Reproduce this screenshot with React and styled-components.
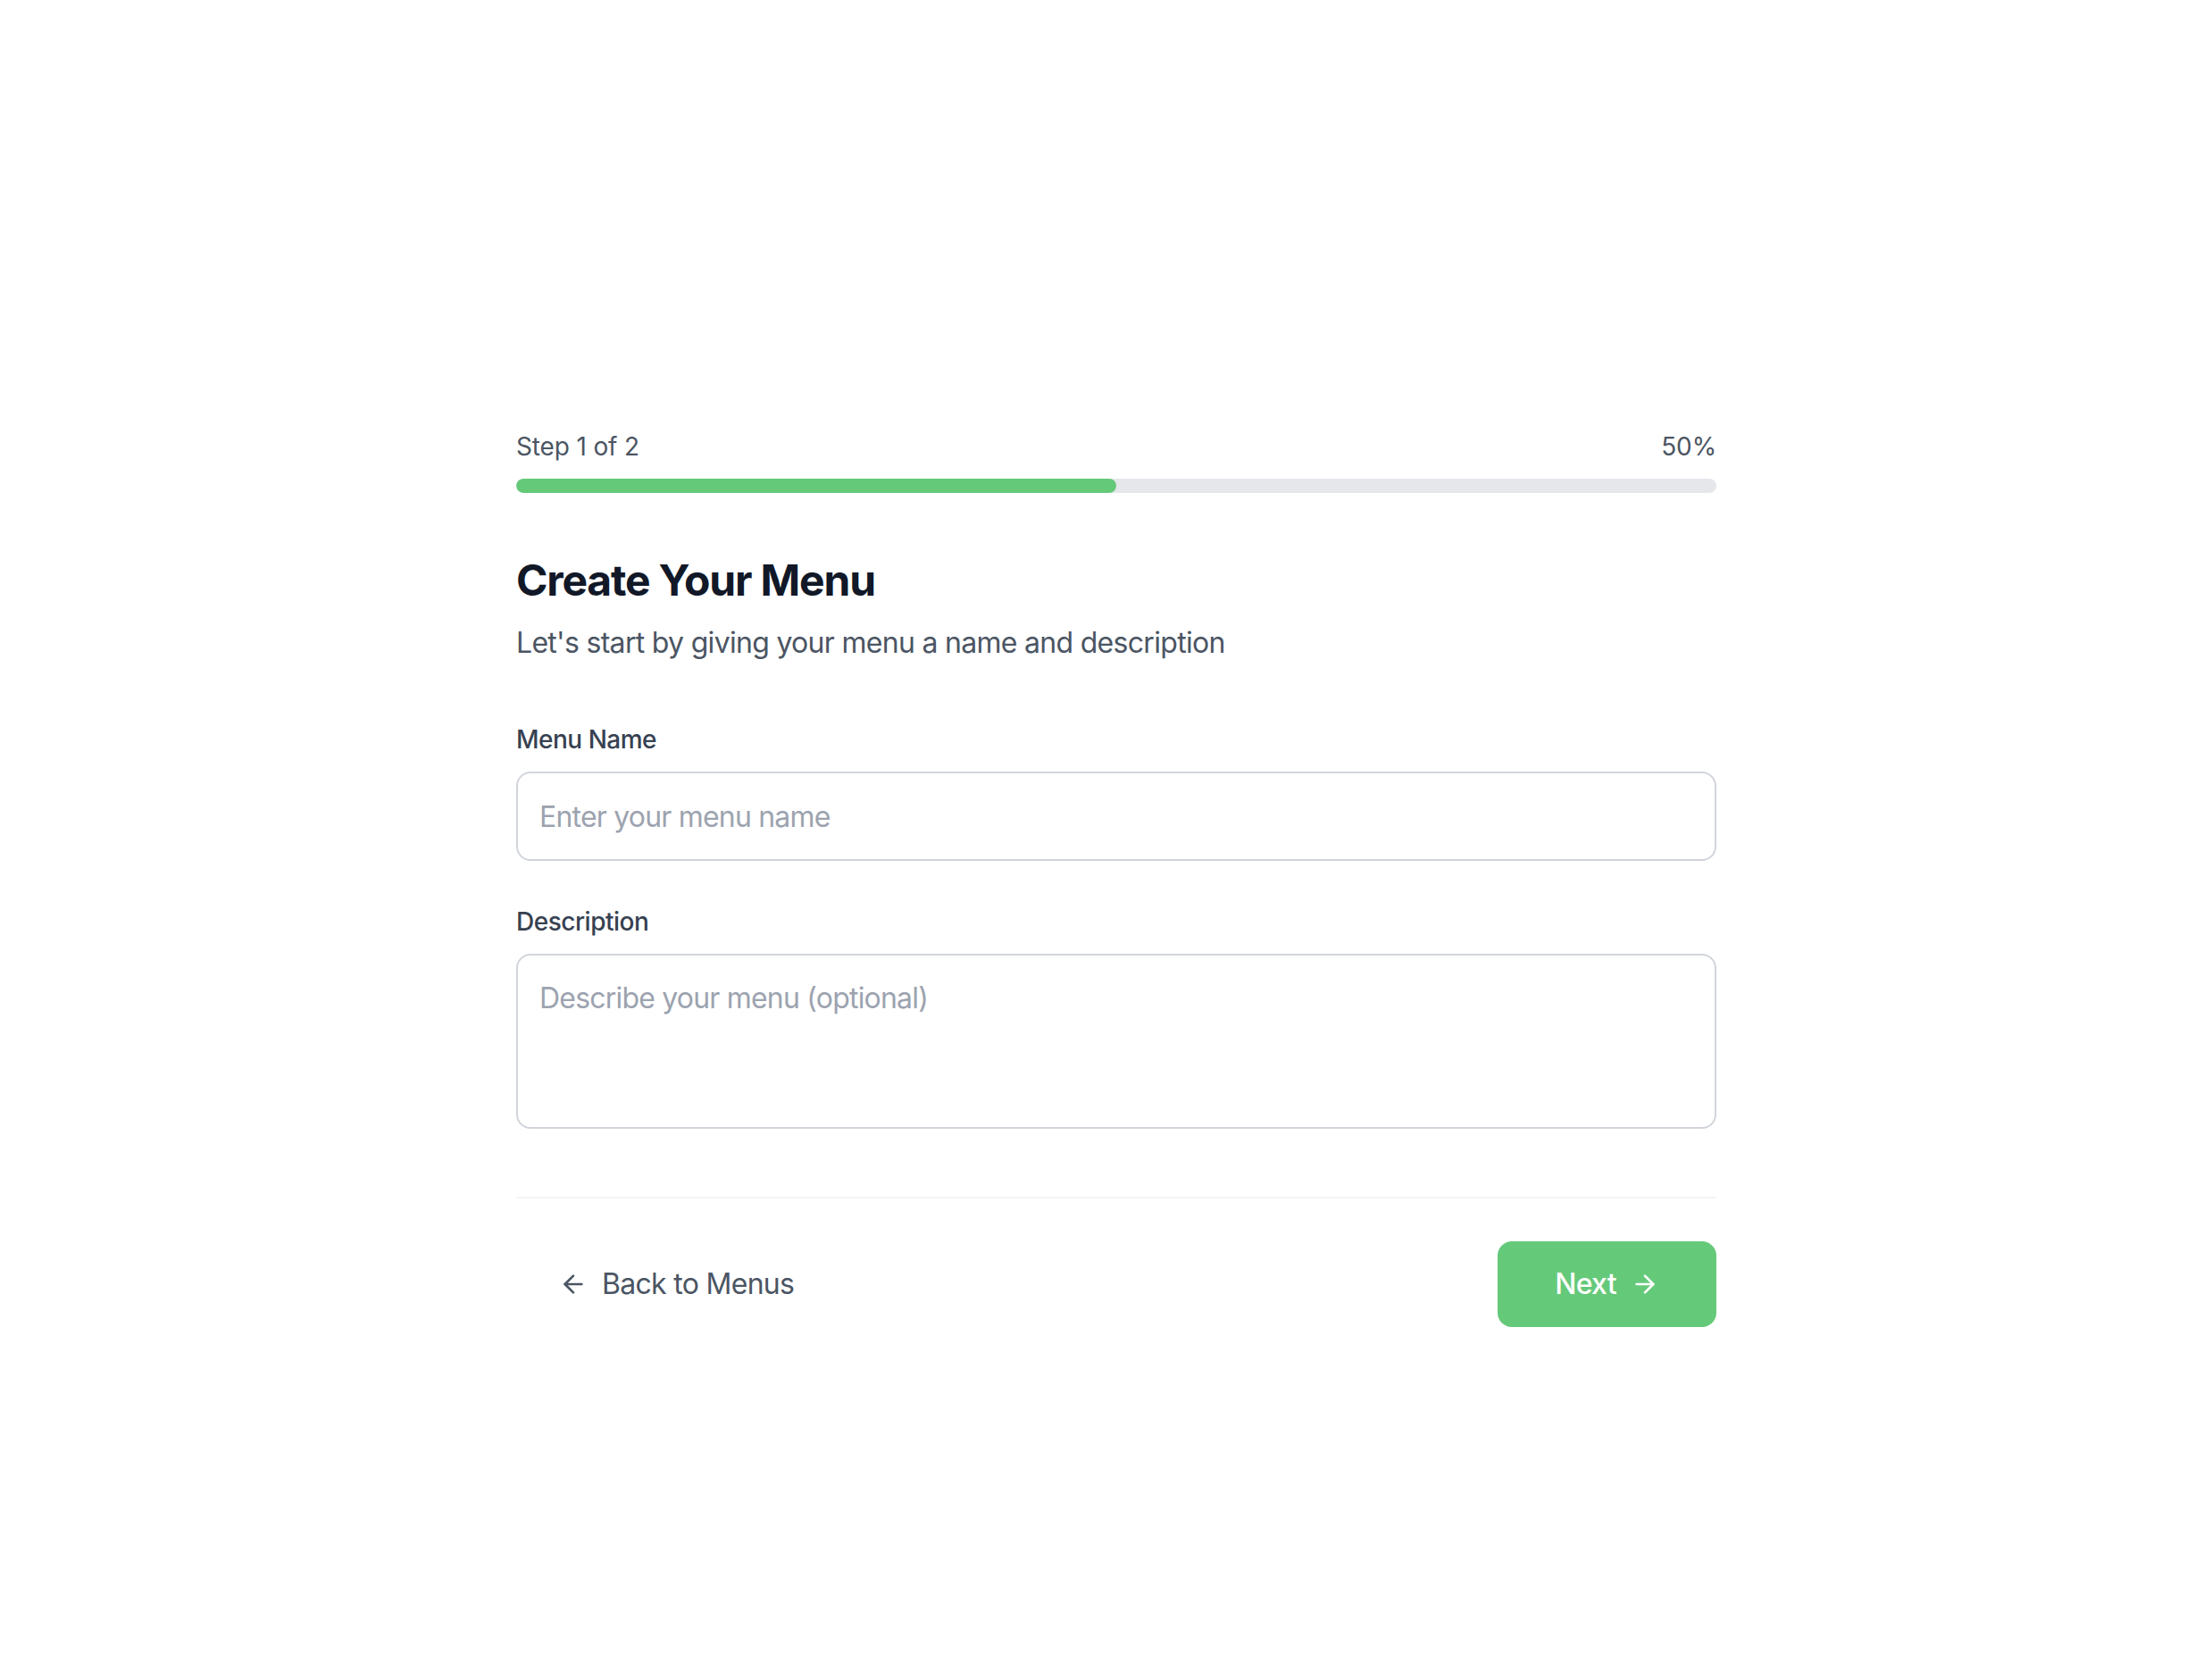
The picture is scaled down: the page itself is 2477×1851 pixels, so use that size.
import React from "react";
import styled, { createGlobalStyle } from "styled-components";
import { ArrowLeft, ArrowRight } from "lucide-react";

const GlobalStyle = createGlobalStyle`
  * { box-sizing: border-box; }
  html, body { margin: 0; padding: 0; background: #ffffff; }
  body {
    font-family: Inter, "Noto Sans", "Liberation Sans", sans-serif;
    -webkit-font-smoothing: antialiased;
  }
`;

const Page = styled.main`
  min-height: 1851px;
  display: flex;
  justify-content: center;
  padding: 480px 0 0 23px;
`;

const Container = styled.div`
  width: 1344px;
  display: flex;
  flex-direction: column;
`;

const ProgressHeader = styled.div`
  display: flex;
  justify-content: space-between;
  align-items: center;
  font-size: 28px;
  line-height: 40px;
  color: #4b5563;
  margin-bottom: 16px;
  letter-spacing: -0.15px;
`;

const Track = styled.div`
  height: 16px;
  width: 100%;
  background: #e5e7eb;
  border-radius: 9999px;
  overflow: hidden;
`;

const Fill = styled.div`
  height: 100%;
  background: #65c97a;
  border-radius: 9999px;
`;

const Title = styled.h1`
  margin: 66px 0 14px;
  font-size: 48px;
  line-height: 64px;
  font-weight: 700;
  color: #111827;
  letter-spacing: -1.2px;
`;

const Subtitle = styled.p`
  margin: 0 0 64px;
  font-size: 32px;
  line-height: 48px;
  color: #4b5563;
  letter-spacing: -0.7px;
`;

const Field = styled.div`
  display: flex;
  flex-direction: column;
  margin-bottom: ${(p) => p.$gap}px;
`;

const Label = styled.label`
  font-size: 28px;
  line-height: 40px;
  font-weight: 500;
  color: #374151;
  margin-bottom: 16px;
  letter-spacing: -0.5px;
`;

const inputBase = `
  width: 100%;
  font-family: Inter, "Noto Sans", "Liberation Sans", sans-serif;
  font-size: 32px;
  line-height: 48px;
  letter-spacing: -0.8px;
  padding: 24px 24px;
  border: 2px solid #d1d5db;
  border-radius: 16px;
  color: #111827;
  background: #ffffff;
  outline: none;
  &::placeholder { color: #9ca3af; }
`;

const TextInput = styled.input`
  ${inputBase}
  height: 100px;
  display: block;
`;

const TextArea = styled.textarea`
  ${inputBase}
  display: block;
  height: 196px;
  resize: none;
`;

const Footer = styled.div`
  margin-top: 12px;
  border-top: 2px solid #f3f4f6;
  padding-top: 48px;
  display: flex;
  justify-content: space-between;
  align-items: center;
`;

const BackButton = styled.button`
  display: flex;
  align-items: center;
  gap: 16px;
  padding: 24px 48px;
  background: transparent;
  border: none;
  font-family: inherit;
  font-size: 32px;
  line-height: 48px;
  font-weight: 400;
  letter-spacing: -0.7px;
  color: #4b5563;
  cursor: pointer;
`;

const NextButton = styled.button`
  display: flex;
  align-items: center;
  gap: 16px;
  padding: 24px 64px;
  background: #65c97a;
  border: none;
  border-radius: 16px;
  font-family: inherit;
  font-size: 32px;
  line-height: 48px;
  font-weight: 500;
  letter-spacing: -0.7px;
  color: #ffffff;
  cursor: pointer;
`;

export default function App() {
  const progress = 50;
  return (
    <>
      <GlobalStyle />
      <Page>
        <Container>
          <ProgressHeader>
            <span>Step 1 of 2</span>
            <span>{progress}%</span>
          </ProgressHeader>
          <Track>
            <Fill style={{ width: `${progress}%` }} />
          </Track>

          <Title>Create Your Menu</Title>
          <Subtitle>Let's start by giving your menu a name and description</Subtitle>

          <Field $gap={48}>
            <Label htmlFor="menu-name">Menu Name</Label>
            <TextInput id="menu-name" type="text" placeholder="Enter your menu name" />
          </Field>

          <Field $gap={64}>
            <Label htmlFor="menu-desc">Description</Label>
            <TextArea id="menu-desc" rows={3} placeholder="Describe your menu (optional)" />
          </Field>

          <Footer>
            <BackButton type="button">
              <ArrowLeft size={32} strokeWidth={2} />
              <span>Back to Menus</span>
            </BackButton>
            <NextButton type="button">
              <span>Next</span>
              <ArrowRight size={32} strokeWidth={2} />
            </NextButton>
          </Footer>
        </Container>
      </Page>
    </>
  );
}
